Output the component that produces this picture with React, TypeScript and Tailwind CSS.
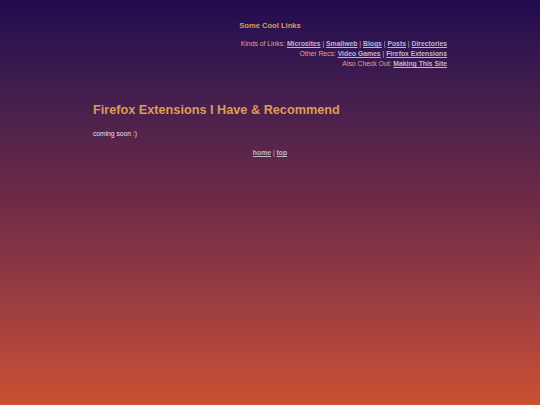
import React from 'react';

const linkCls = 'font-bold underline text-[#b9b7d2]';

function Sep() {
  return <span className="text-[#c9b4c8]"> | </span>;
}

export default function App() {
  return (
    <div
      className="min-h-screen w-full bg-gradient-to-b from-[#220950] via-[#702a46] to-[#cb5030] text-[#e8dde8]"
      style={{ fontFamily: '"Liberation Sans", Arial, sans-serif' }}
    >
      <div className="w-[354px] mx-auto pt-[21px]">
        <header>
          <h2 className="text-center text-[7.6px] leading-[10px] font-bold text-[#dc9c58]">Some Cool Links</h2>
          <nav className="mt-[8px] text-right text-[6.8px] leading-[10px] text-[#e4a08c]">
            <div>
              Kinds of Links: <a className={linkCls}>Microsites</a>
              <Sep />
              <a className={linkCls}>Smallweb</a>
              <Sep />
              <a className={linkCls}>Blogs</a>
              <Sep />
              <a className={linkCls}>Posts</a>
              <Sep />
              <a className={linkCls}>Directories</a>
            </div>
            <div>
              Other Recs: <a className={linkCls}>Video Games</a>
              <Sep />
              <a className={linkCls}>Firefox Extensions</a>
            </div>
            <div>
              Also Check Out: <a className={linkCls}>Making This Site</a>
            </div>
          </nav>
        </header>

        <main className="mt-[33px]">
          <h1 className="text-[12.7px] leading-[16px] font-bold text-[#dc9c58]">
            Firefox Extensions I Have &amp; Recommend
          </h1>
          <p className="mt-[11px] text-[6.7px] leading-[10px] text-[#ece0ea]">coming soon :)</p>
        </main>

        <footer className="mt-[9px] text-center text-[6.8px] leading-[10px] text-[#d8c4d4]">
          <a className={linkCls}>home</a>
          <Sep />
          <a className={linkCls}>top</a>
        </footer>
      </div>
    </div>
  );
}
